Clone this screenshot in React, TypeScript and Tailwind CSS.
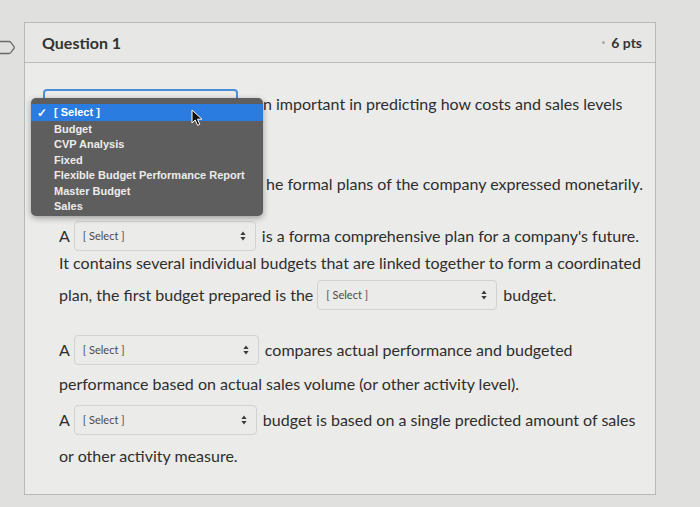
import React from "react";

const font = { fontFamily: "Lato, 'Noto Sans', sans-serif" };

function Arrows() {
  return (
    <svg width="6" height="10" viewBox="0 0 6 10" className="shrink-0">
      <path d="M3 0.5 L5.6 4 H0.4 Z" fill="#3a3a3a" />
      <path d="M3 9.5 L5.6 6 H0.4 Z" fill="#3a3a3a" />
    </svg>
  );
}

function Select({ w = "w-[182px]", focus = false, blank = false }: { w?: string; focus?: boolean; blank?: boolean }) {
  return (
    <div
      className={
        "h-[30px] shrink-0 rounded-[4px] flex items-center justify-between pl-[8px] pr-[9px] text-[11px] text-[#4a4a4a] bg-[#ebebea] " +
        w +
        (focus ? " border-2 border-[#4a8fd8]" : " border border-[#d2d2d0]")
      }
    >
      {blank ? null : (
        <>
          <span>[ Select ]</span>
          <Arrows />
        </>
      )}
    </div>
  );
}

export default function App() {
  const items = ["Budget", "CVP Analysis", "Fixed", "Flexible Budget Performance Report", "Master Budget", "Sales"];
  return (
    <div className="w-[700px] h-[507px] overflow-hidden bg-[#e0e0de] flex text-[#2e2e2e]" style={font}>
      <div className="w-[24px] shrink-0 pt-[40px]">
        <svg width="16" height="15" viewBox="0 0 16 15">
          <path d="M-2 1.5 H9 Q10 1.5 10.8 2.4 L14 6.5 Q14.6 7.5 14 8.5 L10.8 12.6 Q10 13.5 9 13.5 H-2" fill="none" stroke="#6a6a6a" strokeWidth="1.3" />
        </svg>
      </div>
      <div className="relative mt-[22px] w-[632px] h-[473px] shrink-0 border border-[#b9b9b7] bg-[#ebebe9]">
        <div className="h-[40px] border-b border-[#b9b9b7] bg-[#e7e7e5] flex items-center justify-between pl-[17px] pr-[13px]">
          <span className="text-[16px] font-bold text-[#333]">Question 1</span>
          <span className="flex items-center gap-[6px] text-[14px] font-bold text-[#333]">
            <span className="w-[3px] h-[3px] rounded-full bg-[#aaa]" />
            6 pts
          </span>
        </div>
        <div className="pl-[34px] text-[16px] flex flex-col">
          <div className="h-[34px] mt-[24px] flex items-center">
            <div className="ml-[-16px]">
              <Select w="w-[195px]" focus blank />
            </div>
            <span className="ml-[25px]">n important in predicting how costs and sales levels</span>
          </div>
          <div className="h-[28px] mt-[10px]" />
          <div className="h-[34px] mt-[8px] flex items-center">
            <Select blank />
            <span className="ml-[25px]">he formal plans of the company expressed monetarily.</span>
          </div>
          <div className="h-[32px] mt-[19px] flex items-center">
            <span>A</span>
            <div className="ml-[4px]"><Select /></div>
            <span className="ml-[6px]">is a forma comprehensive plan for a company's future.</span>
          </div>
          <div className="h-[22px] flex items-center">
            It contains several individual budgets that are linked together to form a coordinated
          </div>
          <div className="h-[32px] mt-[5px] flex items-center">
            <span>plan, the first budget prepared is the</span>
            <div className="ml-[4px]"><Select w="w-[180px]" /></div>
            <span className="ml-[6px]">budget.</span>
          </div>
          <div className="h-[32px] mt-[23px] flex items-center">
            <span>A</span>
            <div className="ml-[4px]"><Select w="w-[185px]" /></div>
            <span className="ml-[6px]">compares actual performance and budgeted</span>
          </div>
          <div className="h-[22px] mt-[7px] flex items-center">
            performance based on actual sales volume (or other activity level).
          </div>
          <div className="h-[32px] mt-[9px] flex items-center">
            <span>A</span>
            <div className="ml-[4px]"><Select w="w-[183px]" /></div>
            <span className="ml-[6px]">budget is based on a single predicted amount of sales</span>
          </div>
          <div className="h-[22px] mt-[9px] flex items-center">or other activity measure.</div>
        </div>

        <div
          className="absolute left-[6px] top-[75px] w-[232px] h-[118px] rounded-[5px] bg-[#5e5e5e] shadow-[0_2px_6px_rgba(0,0,0,0.35)] pt-[6px] text-[11px] font-bold text-[#ececec]"
          style={{ fontFamily: "'Liberation Sans', Arial, sans-serif" }}
        >
          <div className="h-[17px] bg-[#2b7ce0] text-white flex items-center pl-[6px]">
            <span className="w-[17px] text-[12px]">✓</span>
            <span>[ Select ]</span>
          </div>
          {items.map((t) => (
            <div key={t} className="h-[15.5px] flex items-center pl-[23px]">
              {t}
            </div>
          ))}
        </div>
        <svg className="absolute left-[166px] top-[86px]" width="14" height="18" viewBox="0 0 14 18">
          <path d="M1 1 L1 14 L4.2 11 L6.6 16.4 L8.8 15.4 L6.5 10.2 L11 10.2 Z" fill="#111" stroke="#fff" strokeWidth="1" />
        </svg>
      </div>
    </div>
  );
}
